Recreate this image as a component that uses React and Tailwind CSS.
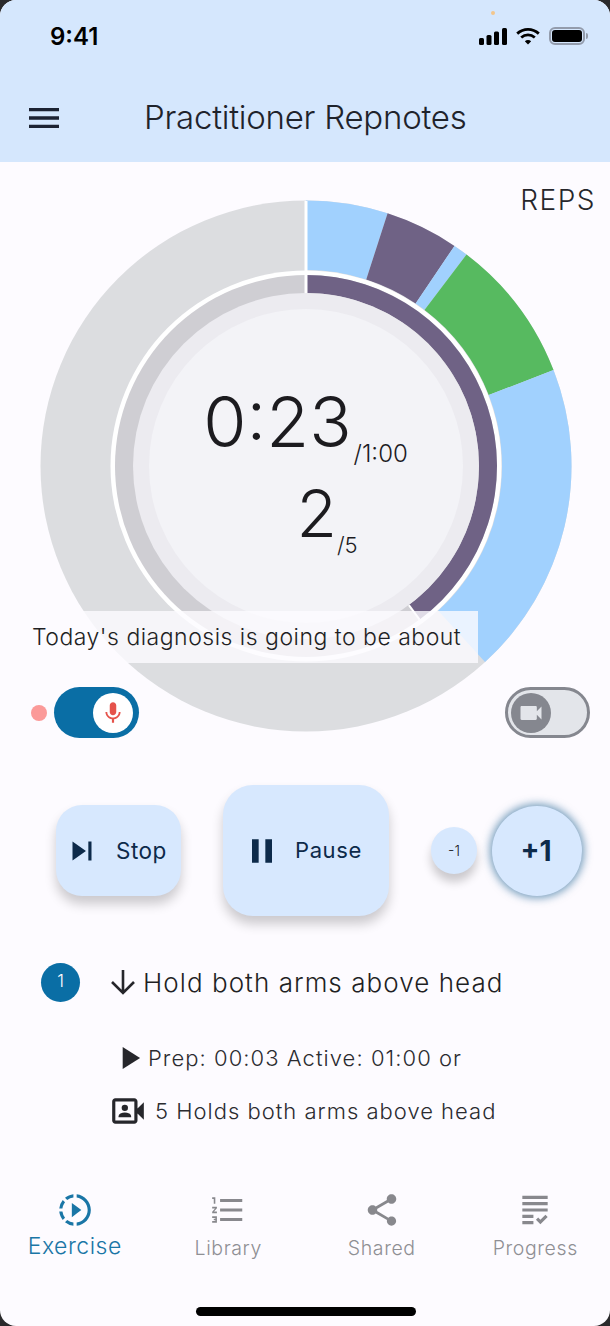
import {
  MdMenu,
  MdMic,
  MdVideocam,
  MdSkipNext,
  MdPause,
  MdPlayArrow,
  MdOutlineVideoCameraFront,
  MdSlowMotionVideo,
  MdFormatListNumbered,
  MdShare,
  MdGrading,
} from 'react-icons/md'

const CX = 266
const CY = 266

function polar(r, deg) {
  const a = ((deg - 90) * Math.PI) / 180
  return [CX + r * Math.cos(a), CY + r * Math.sin(a)]
}

function arc(r1, r2, from, to) {
  const [x1, y1] = polar(r2, from)
  const [x2, y2] = polar(r2, to)
  const [x3, y3] = polar(r1, to)
  const [x4, y4] = polar(r1, from)
  const large = to - from > 180 ? 1 : 0
  return `M${x1} ${y1}A${r2} ${r2} 0 ${large} 1 ${x2} ${y2}L${x3} ${y3}A${r1} ${r1} 0 ${large} 0 ${x4} ${y4}Z`
}

const segments = [
  { from: 0, to: 17.9, color: '#a1d1fe' },
  { from: 17.9, to: 34, color: '#6f6285' },
  { from: 34, to: 37.2, color: '#a1d1fe' },
  { from: 37.2, to: 68.8, color: '#57ba60' },
  { from: 68.8, to: 137.6, color: '#a1d1fe' },
]

function Chart() {
  const [lx, ly] = polar(265, 0)
  const [ex1, ey1] = polar(173, 143.5)
  const [ex2, ey2] = polar(191, 143.5)
  return (
    <svg width="532" height="532" viewBox="0 0 532 532">
      <circle cx={CX} cy={CY} r="265.5" fill="#dcdde0" />
      {segments.map((s) => (
        <path key={s.from} d={arc(196, 265.5, s.from, s.to)} fill={s.color} />
      ))}
      <circle cx={CX} cy={CY} r="195.5" fill="#ffffff" />
      <circle cx={CX} cy={CY} r="191" fill="#cfced3" />
      <path d={arc(173, 191, 0, 143.5)} fill="#6f6285" />
      <circle cx={CX} cy={CY} r="173" fill="#ecebf0" />
      <circle cx={CX} cy={CY} r="157" fill="#f3f3f7" />
      <line x1={lx} y1={ly} x2={CX} y2={CY - 173} stroke="#ffffff" strokeWidth="3" />
      <line x1={ex1} y1={ey1} x2={ex2} y2={ey2} stroke="#ffffff" strokeWidth="2" />
    </svg>
  )
}

function StatusIcons() {
  return (
    <div className="flex items-center gap-[9px]">
      <svg width="28" height="17" viewBox="0 0 28 17" fill="#000000">
        <rect x="0" y="10" width="5" height="7" rx="1.5" />
        <rect x="7.5" y="7" width="5" height="10" rx="1.5" />
        <rect x="15" y="3.5" width="5" height="13.5" rx="1.5" />
        <rect x="23" y="0" width="5" height="17" rx="1.5" />
      </svg>
      <svg width="24" height="17" viewBox="0 0 24 17" fill="none" stroke="#000000" strokeWidth="2.8">
        <path d="M1.2 5.6C7.5 0 16.5 0 22.8 5.6" />
        <path d="M5.2 9.5C9.2 6 14.8 6 18.8 9.5" />
        <path d="M12 16.6L8.8 13.3C10.7 11.7 13.3 11.7 15.2 13.3Z" fill="#000000" stroke="none" />
      </svg>
      <div className="flex items-center">
        <div className="flex h-[18px] w-[36px] items-center justify-center rounded-[6px] border-2 border-[#939cac]">
          <div className="h-[12px] w-[30px] rounded-[3px] bg-black" />
        </div>
        <div className="ml-[1px] h-[6px] w-[2px] rounded-r-sm bg-[#939cac]" />
      </div>
    </div>
  )
}

function NavItem({ icon, label, active }) {
  return (
    <div className={`flex flex-col items-center ${active ? 'text-[#1a76a6]' : 'text-[#88888d]'}`}>
      <div className="flex h-[40px] items-center justify-center">{icon}</div>
      <span className={active ? 'mt-[2px] text-[23px] font-light leading-[28px] tracking-[0.5px]' : 'mt-[4px] text-[19.5px] font-light leading-[28px] tracking-[0.6px] text-[#8f8f94]'}>
        {label}
      </span>
    </div>
  )
}

export default function App() {
  return (
    <div className="h-[1326px] w-[610px] overflow-hidden bg-[#2a2a2c] font-['Inter',sans-serif]">
      <div className="relative flex h-full flex-col overflow-hidden rounded-[16px] bg-[#fdfbff] text-[#1c1b1f]">
        <header className="relative h-[162px] shrink-0 bg-[#d5e7fd]">
          <div className="absolute left-[491px] top-[11px] h-[4px] w-[4px] rounded-full bg-[#f3c68c]" />
          <div className="flex h-[72px] items-center justify-between pl-[50px] pr-[22px]">
            <span className="mt-[2px] text-[24px] font-semibold text-black">9:41</span>
            <StatusIcons />
          </div>
          <div className="flex h-[92px] items-center pl-[24px]">
            <MdMenu size={40} className="text-[#1c2333]" />
            <h1 className="ml-[80px] text-[33px] font-light tracking-[-0.25px] text-[#1f232b]">Practitioner Repnotes</h1>
          </div>
        </header>

        <section className="relative flex justify-center pl-[1px] pt-[38px]">
          <span className="absolute right-[14px] top-[20px] text-[28px] font-light leading-[36px] tracking-[1.5px] text-[#26262b]">REPS</span>
          <div className="relative">
            <Chart />
            <div className="absolute inset-0 flex flex-col items-center pt-[180px]">
              <div className="flex items-end">
                <span className="text-[70px] font-light leading-[84px]">0:23</span>
                <span className="mb-[-4px] ml-[2px] text-[24px] font-light leading-[28px]">/1:00</span>
              </div>
              <div className="mt-[15px] flex items-end pl-[43px]">
                <span className="text-[66px] font-light leading-[68px]">2</span>
                <span className="mb-[-11px] text-[22px] font-light leading-[26px]">/5</span>
              </div>
            </div>
          </div>
          <div className="absolute left-[20px] top-[449px] flex h-[52px] w-[458px] items-center bg-[#fdfbff]/80 pl-[12px]">
            <span className="text-[23px] font-light tracking-[0.5px] text-[#1f1f24]">Today's diagnosis is going to be about</span>
          </div>
        </section>

        <div className="relative -mt-[45px] flex h-[51px] items-center justify-between pl-[31px] pr-[20px]">
          <div className="flex items-center gap-[7px]">
            <div className="h-[16px] w-[16px] rounded-full bg-[#fb9a99]" />
            <div className="flex h-[51px] w-[85px] items-center justify-end rounded-full bg-[#0a6ea5] pr-[6px]">
              <div className="flex h-[40px] w-[40px] items-center justify-center rounded-full bg-white">
                <MdMic size={26} className="text-[#e5534b]" />
              </div>
            </div>
          </div>
          <div className="flex h-[51px] w-[85px] items-center rounded-full border-[3px] border-[#85878f] bg-[#e3e5ea] pl-[3px]">
            <div className="flex h-[40px] w-[40px] items-center justify-center rounded-full bg-[#85878f]">
              <MdVideocam size={28} className="text-[#e3e5ea]" />
            </div>
          </div>
        </div>

        <div className="mt-[47px] flex h-[131px] items-center pl-[56px] text-[#0d2a4a]">
          <button className="flex h-[91px] w-[125px] items-center rounded-[26px] bg-[#d7e8fe] pl-[7px] shadow-[0_8px_12px_rgba(0,0,0,0.2)]">
            <MdSkipNext size={38} />
            <span className="ml-[15px] text-[22.5px] font-normal tracking-[0.5px]">Stop</span>
          </button>
          <button className="ml-[42px] flex h-[131px] w-[166px] items-center rounded-[30px] bg-[#d7e8fe] pl-[19px] shadow-[0_8px_12px_rgba(0,0,0,0.2)]">
            <MdPause size={40} />
            <span className="ml-[13px] text-[22px] font-normal tracking-[0.6px]">Pause</span>
          </button>
          <button className="ml-[42px] flex h-[47px] w-[46px] items-center justify-center rounded-full bg-[#d7e8fe] text-[14px] font-light text-[#1c1b1f] shadow-[0_8px_10px_rgba(0,0,0,0.2)]">-1</button>
          <button className="ml-[15px] flex h-[90px] w-[90px] items-center justify-center rounded-full bg-[#d7e8fe] pr-[2px] text-[28px] font-bold shadow-[0_0_8px_2px_rgba(20,90,140,0.6)]">+1</button>
        </div>

        <div className="mt-[46px] flex h-[40px] items-center pl-[41px]">
          <div className="flex h-[39px] w-[39px] items-center justify-center rounded-full bg-[#0a6ea5] text-[17px] font-light text-white">1</div>
          <svg width="26" height="26" viewBox="0 0 26 26" fill="none" stroke="#26262b" strokeWidth="2.6" className="ml-[30px]">
            <path d="M13 1V24M2 13L13 24L24 13" />
          </svg>
          <span className="ml-[7px] text-[26px] font-light tracking-[1.05px] text-[#1f1f24]">Hold both arms above head</span>
        </div>
        <div className="mt-[36px] flex h-[40px] items-center pl-[110px]">
          <MdPlayArrow size={38} className="text-[#26262b]" />
          <span className="text-[22px] font-light tracking-[1.05px] text-[#2b2b30]">Prep: 00:03 Active: 01:00 or</span>
        </div>
        <div className="mt-[13px] flex h-[40px] items-center pl-[109px]">
          <MdOutlineVideoCameraFront size={38} className="text-[#26262b]" />
          <span className="ml-[8px] text-[22px] font-light tracking-[1px] text-[#2b2b30]">5 Holds both arms above head</span>
        </div>

        <nav className="-ml-[2px] mt-[59px] grid w-[614px] grid-cols-4">
          <NavItem active label="Exercise" icon={<MdSlowMotionVideo size={38} />} />
          <NavItem label="Library" icon={<MdFormatListNumbered size={38} />} />
          <NavItem label="Shared" icon={<MdShare size={38} />} />
          <NavItem label="Progress" icon={<MdGrading size={38} />} />
        </nav>

        <div className="absolute bottom-[10px] left-[196px] h-[9px] w-[220px] rounded-full bg-black" />
      </div>
    </div>
  )
}
